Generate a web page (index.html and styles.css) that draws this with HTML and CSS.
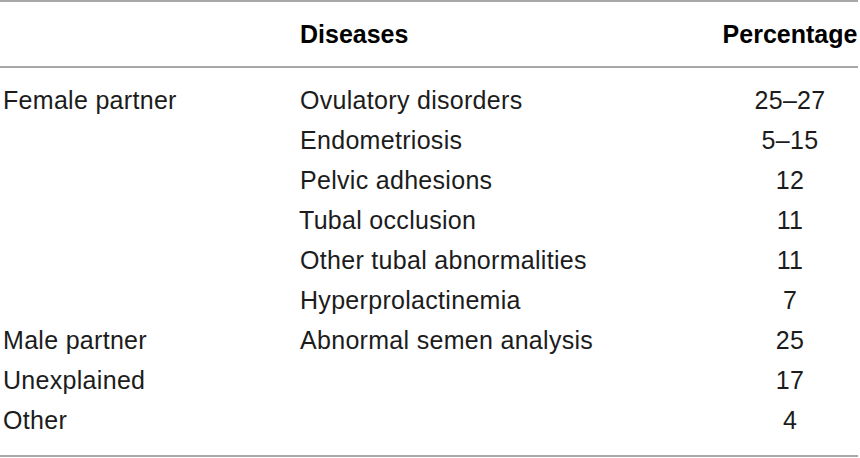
FILE: index.html
```html
<!DOCTYPE html>
<html>
<head>
<meta charset="utf-8">
<link rel="stylesheet" href="styles.css">
</head>
<body>
<table class="data">
  <thead>
    <tr>
      <th class="c1"></th>
      <th class="c2">Diseases</th>
      <th class="c3">Percentage</th>
    </tr>
  </thead>
  <tbody>
    <tr class="first"><td class="c1">Female partner</td><td class="c2">Ovulatory disorders</td><td class="c3">25–27</td></tr>
    <tr><td class="c1"></td><td class="c2">Endometriosis</td><td class="c3">5–15</td></tr>
    <tr><td class="c1"></td><td class="c2">Pelvic adhesions</td><td class="c3">12</td></tr>
    <tr><td class="c1"></td><td class="c2 nudge">Tubal occlusion</td><td class="c3">11</td></tr>
    <tr><td class="c1"></td><td class="c2">Other tubal abnormalities</td><td class="c3">11</td></tr>
    <tr><td class="c1"></td><td class="c2">Hyperprolactinemia</td><td class="c3">7</td></tr>
    <tr><td class="c1">Male partner</td><td class="c2">Abnormal semen analysis</td><td class="c3">25</td></tr>
    <tr><td class="c1">Unexplained</td><td class="c2"></td><td class="c3">17</td></tr>
    <tr class="last"><td class="c1">Other</td><td class="c2"></td><td class="c3">4</td></tr>
  </tbody>
</table>
</body>
</html>
```

FILE: styles.css
```css
html, body {
  margin: 0;
  padding: 0;
  background: #ffffff;
}

.data {
  width: 858px;
  border-collapse: collapse;
  font-family: "Liberation Sans", Arial, sans-serif;
  font-size: 25px;
  color: #1c1c1c;
  border-top: 2px solid #a8a8a8;
  border-bottom: 2px solid #a8a8a8;
}

.data thead tr {
  height: 66px;
  border-bottom: 2px solid #a8a8a8;
}

.data th {
  font-weight: bold;
  color: #000000;
  padding: 0;
  vertical-align: middle;
}

.data td {
  padding: 0;
  height: 40px;
  line-height: 40px;
  vertical-align: middle;
  white-space: nowrap;
  letter-spacing: 0.3px;
}

.data .first td {
  padding-top: 12px;
}

.data .last td {
  padding-bottom: 15px;
}

.c1 {
  width: 297px;
  padding-left: 3px !important;
  text-align: left;
}

.c2 {
  width: 422px;
  text-align: left;
}

.c3 {
  width: 136px;
  text-align: center;
}

.nudge {
  text-indent: -1px;
}
```
